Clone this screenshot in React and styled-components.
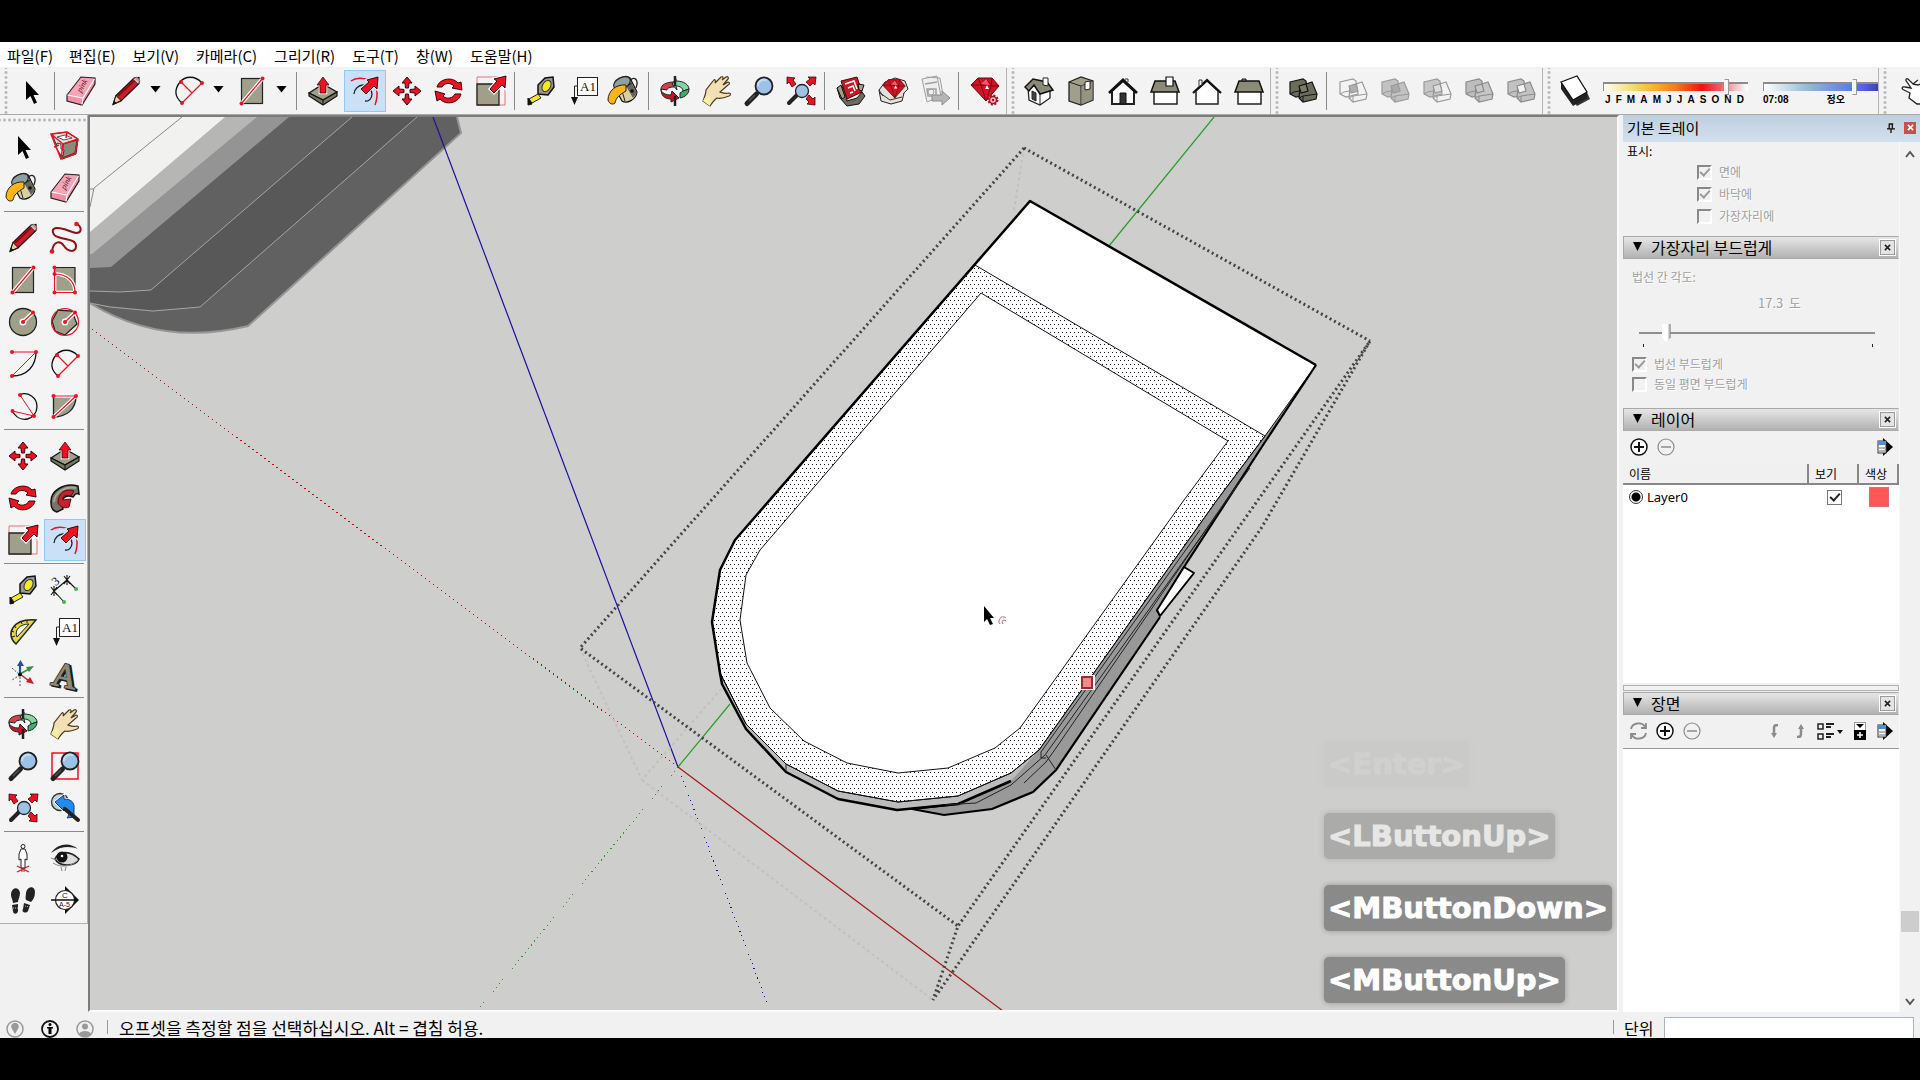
import React, { useState } from 'react';
import styled, { createGlobalStyle, css } from 'styled-components';

const GlobalStyle = createGlobalStyle`
  * {
    box-sizing: border-box;
  }
  body {
    margin: 0;
    background: #000;
    font-family: "Noto Sans CJK KR", sans-serif;
    font-size: 15px;
    color: #000;
  }
  button, input {
    font-family: inherit;
    margin: 0;
  }
`;

/* ---------- icons ---------- */

const RED = '#ee1122';
const STONE = '#a09f8a';

const dot = (x, y, r = 2) => <circle cx={x} cy={y} r={r} fill={RED} />;

const moveHead = 'M15 1l5 6h-3l-.5 5h-3l-.5-5h-3z';

const magnifier = (
  <>
    <path d="M3 27.500l9.500-9.500" stroke="#222" strokeWidth="5" strokeLinecap="round" />
    <path d="M5 25l6-6" stroke="#555" strokeWidth="1.500" />
    <circle cx="20" cy="10" r="8.500" fill="#9cc2e8" stroke="#222" strokeWidth="1.800" />
    <path d="M14 10a6 6 0 0 1 9-5.500" stroke="#c4dcf4" strokeWidth="2" fill="none" />
  </>
);

const gem = (
  <>
    <path d="M8 2h14l7 8-13 15L1 9z" fill="#d31323" stroke="#6d0710" strokeWidth="1" />
    <path d="M8 2l3 7 5-7 5 8 1-8M1 9l10 0 10 1 8 0M11 9l5 16 5-15" fill="none" stroke="#7d0a14" />
    <path d="M11 8l5-5 4 6z" fill="#f4586a" />
    <path d="M15 13l2-4 2 4z" fill="#fff" />
  </>
);

const solids = (a, b, mid, line) => (
  <>
    <path d="M2 6l13-3 3 2 2 13-12 3-6-3z" fill={a} stroke={line} strokeWidth="1.200" />
    <path d="M12 10l12-4 5 12-1 5-13 3-4-4z" fill={b} stroke={line} strokeWidth="1.200" />
    <path d="M11 10l7-2 2 7-7 2z" fill={mid} stroke={line} strokeWidth="1.200" />
    <path d="M11 22l4-2 14-2M15 20v6M2 18l4-2 5-1" fill="none" stroke={line} />
  </>
);

const icons = {
  select: <path d="M10 5v19l4.500-4 3.500 8 3-1.500-3.500-7.500H23z" fill="#000" />,
  component: (
    <>
      <path d="M2 3L17 1l11 7-2 15-14 5z" fill="#e4e4e0" stroke="#222" />
      <path d="M13 13l14-4-2 13-13 5z" fill="#8b8a78" stroke="#222" />
      <path d="M7 12l4 1 0 5 3 1-1 6-3-2-4-6z" fill="#fff" stroke="#333" />
      <path d="M7 6l8-2 7 3-8 2z" fill="#fff" stroke="#555" />
      <path d="M1 3L17 1l11 7-3 15-14 5zM1 3l12 10 15-5M13 13l-2 15M17 1l-1 6M4 16l5-2" fill="none" stroke={RED} strokeWidth="1.500" />
    </>
  ),
  paint: (
    <>
      <path d="M5 12C5 3 15-2 20 2l7 14c-1 8-10 12-15 9z" fill="#d8cfa4" stroke="#111" strokeWidth="1.200" />
      <path d="M16 10l5-4 6 11-4 5z" fill="#66655c" />
      <path d="M12 13l10-6M15 25l-3-10" stroke="#222" />
      <ellipse cx="12" cy="7" rx="9" ry="5.500" transform="rotate(-28 12 7)" fill="#8fa0a0" stroke="#222" strokeWidth="1.200" />
      <path d="M16 9C6 8-2 15-2 24c1 4 5 5 7 3 1-5 4-8 11-12z" fill="#fdb515" stroke="#222" />
      <path d="M20 4c5-4 9 0 6 8" fill="none" stroke="#222" strokeWidth="1.300" />
      <circle cx="22" cy="15" r="1.800" fill="#111" />
    </>
  ),
  eraser: (
    <>
      <path d="M1 19L15 1l14 1v6L16 29 1 25z" fill="#f58ea4" stroke="#222" strokeWidth="1.200" />
      <path d="M2 19L15 2l13 1-11 18z" fill="#f7a4b8" />
      <path d="M1.500 19l15.500 3L28.500 3M17 22l-1 6.500" fill="none" stroke="#fff" strokeWidth="1.200" />
      <text x="15" y="17" transform="rotate(-60 15 17)" fontSize="8" fontStyle="italic" fontFamily="Liberation Serif" fill="#4d1022">pink</text>
    </>
  ),
  pencil: (
    <>
      <path d="M2 28.500l3-9L23 2l5-.5v6L10 25z" fill="#cf1b26" stroke="#111" strokeWidth="1.200" />
      <path d="M7 20L24 4" stroke="#7a0b12" strokeWidth="1.500" />
      <path d="M2 28.500l3-9 5 5z" fill="#e6cf9a" stroke="#111" />
      <path d="M2 28.500l1.200-3.500 2.300 2z" fill="#111" />
      <path d="M22 3l5 5 2-3-3-4z" fill="#c9c9c9" stroke="#444" strokeWidth=".8" />
      <path d="M25 2l3 3" stroke="#e7808c" strokeWidth="2" />
    </>
  ),
  freehand: (
    <>
      <path d="M2 29C3 18 10 17 14 23s12 7 12 0-10-6-18-9C2 12 1 6 6 5c7-1 14 4 20 5 6 0 6-6 1-9" fill="none" stroke="#8f1119" strokeWidth="2" />
      {dot(2, 28.500, 2.300)}
      {dot(26.500, 1, 2.300)}
    </>
  ),
  rect: (
    <>
      <rect x="4.500" y="2.500" width="21" height="25" fill={STONE} stroke="#222" strokeWidth="1.200" />
      <path d="M4.500 27.500l21-25" stroke="#fff" strokeWidth="3.600" />
      <path d="M4.500 27.500l21-25" stroke={RED} strokeWidth="1.200" />
      {dot(4.500, 27.500)}
      {dot(25.500, 2.500)}
    </>
  ),
  rotRect: (
    <>
      <path d="M4.500 2.500h20.500v25H4.500z" fill={STONE} stroke="#222" strokeWidth="1.200" />
      <path d="M4.500 9C17 9 25 16 25 27.500H4.500z" fill={STONE} stroke="#fff" strokeWidth="3.600" />
      <path d="M4.500 9C17 9 25 16 25 27.500H4.500zV2.500" fill="none" stroke={RED} strokeWidth="1.200" />
      {dot(4.500, 2.500)}
      {dot(4.500, 9)}
      {dot(4.500, 27.500)}
      {dot(25, 27.500)}
    </>
  ),
  circle: (
    <>
      <circle cx="15" cy="15" r="13.500" fill={STONE} stroke="#222" strokeWidth="1.300" />
      <path d="M15 15L25 5.500" stroke="#fff" strokeWidth="4" />
      <circle cx="15" cy="15" r="3.500" fill="#fff" />
      <path d="M15 15L25 5.500" stroke={RED} strokeWidth="1.200" />
      {dot(15, 15)}
      {dot(25, 5.500)}
    </>
  ),
  polygon: (
    <>
      <path d="M8 3l14 1 5 13-12 11-10-4-3-10z" fill={STONE} stroke="#222" strokeWidth="1.300" />
      <circle cx="15" cy="15" r="13.500" fill="none" stroke={RED} strokeWidth="1.200" />
      <path d="M15 15L25 5.500" stroke="#fff" strokeWidth="4" />
      <circle cx="15" cy="15" r="3.500" fill="#fff" />
      <path d="M15 15L25 5.500" stroke={RED} strokeWidth="1.200" />
      {dot(15, 15)}
      {dot(25, 5.500)}
    </>
  ),
  arc: (
    <>
      <path d="M28 3c0 14-9 24-24 24" fill="none" stroke="#111" strokeWidth="1.300" />
      <path d="M28 3H4M28 3L4 27" fill="none" stroke={RED} />
      {dot(28, 3)}
      {dot(4, 3)}
      {dot(4, 27)}
    </>
  ),
  arc2: (
    <>
      <path d="M28 7C21-1 11 0 6 6-1 15 2 22 8 27" fill="none" stroke="#111" strokeWidth="1.300" />
      <path d="M28 7L8 27M7 6l11 11" fill="none" stroke={RED} strokeWidth="1.200" />
      {dot(28, 7)}
      {dot(7, 6)}
      {dot(8, 27)}
    </>
  ),
  arc3: (
    <>
      <path d="M12 3.500c8-3 17 3 17 12 0 13-17 19-25 4" fill="none" stroke="#111" strokeWidth="1.300" />
      <path d="M12 4l14 21L4.500 20" fill="none" stroke={RED} />
      {dot(12, 4)}
      {dot(26, 25)}
      {dot(4.500, 20)}
    </>
  ),
  pie: (
    <>
      <path d="M3.500 5H26c0 13-9 21-22.500 21z" fill={STONE} stroke="#222" strokeWidth="1.300" />
      <path d="M3.500 26L26 5H3.500" stroke="#fff" strokeWidth="3.600" fill="none" />
      <path d="M3.500 26L26 5H3.500" stroke={RED} strokeWidth="1.200" fill="none" />
      {dot(3.500, 5)}
      {dot(26, 5)}
      {dot(3.500, 26)}
    </>
  ),
  move: [0, 90, 180, 270].map((a) => (
    <path key={a} d={moveHead} transform={`rotate(${a} 15 15)`} fill={RED} stroke="#3a0508" />
  )),
  push: (
    <>
      <path d="M1 17l14-9 14 8-14 8z" fill={STONE} stroke="#111" strokeWidth="1.200" />
      <path d="M1 17v3l14 9 14-9v-4l-14 8z" fill="#77755f" stroke="#111" strokeWidth="1.200" />
      <path d="M15 24v5" stroke="#111" />
      <path d="M15 1l6 8h-3v8h-6V9H9z" fill={RED} stroke="#fff" strokeWidth="2.500" />
      <path d="M15 1l6 8h-3v8h-6V9H9z" fill={RED} stroke="#3a0508" strokeWidth=".8" />
    </>
  ),
  rotate: (
    <>
      <path d="M3 11C5 3 18 0 24 7l3-1 1 8-10-2 2-2C16 6 10 7 8 11z" fill={RED} stroke="#3a0508" />
      <path d="M27 18c-2 9-15 12-21 5l-3 2-2-10 10 3-2 2c4 4 10 2 12-2z" fill={RED} stroke="#3a0508" />
    </>
  ),
  follow: (
    <>
      <path d="M1 20C0 8 14-1 28 3l1 8c-4-2-5 2-6 3-8-3-14 2-10 12l-6 3c-4-1-6-5-6-9z" fill="#77756a" stroke="#111" strokeWidth="1.500" />
      <path d="M4 19C5 9 15 3 26 5" fill="none" stroke="#aaa896" strokeWidth="2" />
      <path d="M8 20C8 10 15 5 24 8l-3 5c-6-2-9 1-8 4l8-1-2 8c-4 2-9 0-11-4z" fill="#c9202b" stroke="#5d0a10" />
    </>
  ),
  scale: (
    <>
      <path d="M1 1h28v28H1z" fill="none" stroke="#e8707a" />
      <path d="M1 8h22v21H1z" fill={STONE} stroke="#222" strokeWidth="1.300" />
      <path d="M14 13l7-8-3-2 12-3-1 12-3-3-8 8z" fill={RED} stroke="#fff" strokeWidth="3" />
      <path d="M14 13l7-8-3-2 12-3-1 12-3-3-8 8z" fill={RED} stroke="#3a0508" />
    </>
  ),
  offset: (
    <>
      <path d="M1 5C10-2 34 3 25 29" fill="none" stroke={RED} strokeWidth="1.500" />
      <path d="M4 18c1-11 17-13 18 0 0 4-3 8-7 7" fill="none" stroke="#222" strokeWidth="1.300" />
      <path d="M11 13l8-7-2-2 11-3-1 12-3-3-8 8z" fill={RED} stroke="#cfe2f6" strokeWidth="3" />
      <path d="M11 13l8-7-2-2 11-3-1 12-3-3-8 8z" fill={RED} stroke="#3a0508" />
    </>
  ),
  tape: (
    <>
      <path d="M12 9L19 2l8-1 1 10-6 8-10-1z" fill="#99998f" stroke="#111" strokeWidth="1.500" />
      <ellipse cx="20.500" cy="10" rx="4" ry="6" transform="rotate(30 20.500 10)" fill="#f4ea1e" stroke="#333" />
      <path d="M3 23l9-5 3 4-9 5z" fill="#f4ea1e" stroke="#222" />
      <path d="M2 22l4 6-4 1z" fill="#111" stroke="#111" />
    </>
  ),
  dimension: (
    <>
      <path d="M4 16L17 5M4 16l10 11M17 5l9 9M1 12l6 8M7 12l-6 8M14 1l6 8M20 1l-6 8M4 11v10M17 0v10" fill="none" stroke="#111" strokeWidth="1.100" />
      <text x="3" y="10" fontSize="12" fill="#111" transform="rotate(-40 6 7)" fontFamily="Liberation Serif">3</text>
      <circle cx="14" cy="27" r="2" fill="#3fb54a" />
      <circle cx="26" cy="14" r="2" fill="#3fb54a" />
    </>
  ),
  protractor: (
    <>
      <path d="M8 27C-3 18 4 1 28 3z" fill="#e5d83a" stroke="#222" strokeWidth="1.500" />
      <path d="M9 20C6 13 12 7 21 7z" fill="#f3f3f3" stroke="#222" />
      <path d="M3 14l3 1M6 8l2 3M13 4l1 3M19 3v3M4 20l3-1" stroke="#222" />
    </>
  ),
  text: (
    <>
      <rect x="9.500" y="1.500" width="20" height="18" fill="#fff" stroke="#222" />
      <text x="12" y="15" fontSize="13" fontFamily="Liberation Serif" fill="#111">A1</text>
      <path d="M9.500 10H6.500v13" fill="none" stroke="#222" />
      <path d="M3 21h7l-3.500 8z" fill="#111" />
    </>
  ),
  axes: (
    <>
      <path d="M4 9l8 7M12 18v9M12 16l-8 5" stroke="#555" strokeDasharray="2 1.500" />
      <path d="M12 15V5" stroke="#234f9e" strokeWidth="2.200" />
      <path d="M9 7l3.500-6L16 7z" fill="#234f9e" />
      <path d="M12 15l9-5" stroke="#2f9440" strokeWidth="1.500" />
      <path d="M18 8l8-1-5 6z" fill="#2f9440" />
      <path d="M12 15l9 7" stroke="#cf1b26" strokeWidth="1.500" />
      <path d="M22 18l4 7-8-2z" fill="#cf1b26" />
      <circle cx="12" cy="15.500" r="2" fill="#111" />
    </>
  ),
  text3d: (
    <g transform="rotate(12 15 15)" fontSize="34" fontFamily="Liberation Serif">
      <text x="5" y="29" fill="#333" stroke="#1a1a1a" strokeWidth="2.500">A</text>
      <text x="3" y="28" fill="#8b8a78" stroke="#222" strokeWidth="2.500">A</text>
      <text x="3" y="28" fill="#8b8a78" stroke="#8b8a78" strokeWidth="1">A</text>
    </g>
  ),
  orbit: (
    <>
      <path d="M14 6C6 6 1 9 1 13l6 1c0-2 3-3 7-3z" fill="#d6404a" stroke="#222" />
      <path d="M16 5c8 0 13 4 13 8l-6 2c0-3-3-5-7-5l1 4-5-6 4-5z" fill="#7fd6a0" stroke="#222" />
      <path d="M29 13c0 5-4 8-9 9v-5l3-2z" fill="#3fae6c" stroke="#222" />
      <path d="M1 13c0 4 5 6 10 6l1-4 7 7-8 4v-3C4 23 1 19 1 13z" fill="#c2182b" stroke="#222" />
      <path d="M15 0v10M15 20v10" stroke="#222" strokeWidth="2.500" />
    </>
  ),
  pan: (
    <>
      <path d="M1 25c2-5 3-8 3-11l7-9c2-3 3 0 2 2l6-6c2-1 3 1 1 3l4-3c2-1 3 1 2 2l-5 6 5-3c2 0 2 2 0 3l-8 7c3 1 5 2 9 1 2 0 2 2 0 3-5 2-8 3-12 2-3 2-5 5-7 8z" fill="#f3dfb6" stroke="#4a3a1c" strokeWidth="1.200" />
      <path d="M1 25c2-4 3-6 7-5 1 3 0 7 0 10z" fill="#f7eda6" />
    </>
  ),
  zoom: magnifier,
  zoomWindow: (
    <>
      <rect x="2" y="2" width="26" height="26" fill="none" stroke={RED} strokeWidth="1.500" />
      {magnifier}
    </>
  ),
  extents: (
    <>
      <path d="M3 27l9-9" stroke="#222" strokeWidth="4" strokeLinecap="round" />
      <circle cx="16" cy="15" r="6.500" fill="#9cc2e8" stroke="#222" strokeWidth="1.300" />
      {['M1 1l8 1-2 2 3 4-4 3-3-5-2 2z', 'M30 1l-1 8-2-2-3 3-4-4 4-3-2-2z', 'M29 29l-8-1 2-2-3-3 3-4 4 4 2-2z'].map((d) => (
        <path key={d} d={d} fill={RED} stroke="#3a0508" strokeWidth=".8" />
      ))}
    </>
  ),
  previous: (
    <>
      <circle cx="10" cy="9" r="8.500" fill="#b9d2ea" stroke="#333" strokeWidth="1.300" />
      <path d="M5 9l9-7v4c8 0 11 4 10 11v7l-7 1c3-4 2-9-3-11v4z" fill="#1f8df0" stroke="#fff" strokeWidth="2.500" />
      <path d="M5 9l9-7v4c8 0 11 4 10 11v7l-7 1c3-4 2-9-3-11v4z" fill="#1f8df0" stroke="#114" strokeWidth=".8" />
      <path d="M15 16l13 11" stroke="#222" strokeWidth="4" strokeLinecap="round" />
    </>
  ),
  person: (
    <>
      <path d="M9 29l12-6M9 23l12 6M13 28h4" stroke={RED} strokeWidth="1.200" />
      <circle cx="15" cy="3.500" r="2" fill="#fff" stroke="#222" />
      <path d="M13 6l-2 5 0 6 2-1v9h4v-9l2 1v-6l-2-5z" fill="#fff" stroke="#222" />
    </>
  ),
  eye: (
    <>
      <path d="M1 10C8 0 20-1 28 6c-8-3-17-3-27 4z" fill="#222" />
      <path d="M5 16c4-8 15-9 24 0-3 7-19 9-24 0z" fill="#ddd" stroke="#222" strokeWidth="1.600" />
      <circle cx="12" cy="14" r="5.500" fill="#111" />
      <circle cx="12" cy="13" r="1.300" fill="#fff" />
      <path d="M1 15l5 2M3 20c8 5 18 4 25-3M11 24l1 4M16 24l-1 4" stroke="#888" fill="none" />
    </>
  ),
  walk: (
    <>
      <path d="M3 10C3 2 11 1 12 8c0 4-2 6-2 9l-5 1c0-3-2-5-2-8zM4 20l6-1 0 7c0 3-5 4-5 0z" fill="#222" />
      <path d="M18 8c1-7 9-8 9-1 0 5-2 8-4 10l-5-2c-1-2 0-5 0-7zM16 18l6 2-2 6c-2 3-7 1-5-2z" fill="#222" />
      <path d="M5 23h5M17 21l4 1" stroke="#bbb" strokeDasharray="1 1" />
    </>
  ),
  section: (
    <>
      <path d="M15 1l7 7-7 0zM15 29l7-7-7 0zM22 8l7 7-7 7z" fill="#111" />
      <circle cx="15" cy="15" r="9.500" fill="#fff" stroke="#222" strokeWidth="1.200" />
      <path d="M1 15h26" stroke="#111" strokeWidth="1.500" />
      <text x="12" y="13" fontSize="8" fill="#222" fontFamily="Liberation Sans">C</text>
      <text x="9" y="22" fontSize="7" fill="#222" fontFamily="Liberation Sans">A-5</text>
    </>
  ),
  warehouse: (
    <>
      <path d="M1 12l8-1 2 14 10-3 5-6 3 4-6 8-12 2-7-8z" fill="#6d6b5c" stroke="#111" />
      <path d="M5 5l16-4 5 15-15 7z" fill="#c9182a" stroke="#500" />
      <path d="M9 8l9-3 3 8M12 12l5-2 2 5M14 17l3-1" fill="none" stroke="#fff" strokeWidth="1.500" />
      <path d="M1 12l4-3 4 12-3 2zM22 8l6 1-2 6-3-1z" fill="#a09f8a" stroke="#111" />
    </>
  ),
  extWarehouse: (
    <>
      <path d="M1 14l6-8 10-4 10 3 3 8-4 4-2 8-11 3-10-3z" fill="#e2e2dc" stroke="#222" />
      <path d="M1 14l4 6M30 13l-5 5M2 17l10 7 12-3" fill="none" stroke="#333" />
      <g transform="translate(4 2) scale(.8)">{gem}</g>
    </>
  ),
  share: (
    <>
      <path d="M2 3l15-3 4 20-14 6zM6 1l14 1 3 17" fill="#eee" stroke="#a0a0a0" />
      <path d="M5 8l12-2M7 13h9v7H8z" fill="none" stroke="#a0a0a0" strokeWidth="1.500" />
      <circle cx="11" cy="16" r="3" fill="none" stroke="#a0a0a0" />
      <path d="M12 19h10v-4l8 7-8 7v-4H12z" fill="#b5b5b5" stroke="#8d8d8d" />
    </>
  ),
  ruby: (
    <>
      {gem}
      <circle cx="23" cy="24" r="4.500" fill="#f7c8cc" stroke="#a5121f" strokeWidth="2" strokeDasharray="2 1.500" />
      <circle cx="23" cy="24" r="3.500" fill="#f7c8cc" stroke="#a5121f" strokeWidth="1.500" />
      <circle cx="23" cy="24" r="1.200" fill="#a5121f" />
    </>
  ),
  iso: (
    <>
      <path d="M4 12l1 12 11 5 10-7V11l-8-3z" fill="#fff" stroke="#222" strokeWidth="1.300" />
      <path d="M16 16v13" stroke="#222" />
      <path d="M1 11L9 3l14 3 6 8-13 4-6-9-5 6z" fill="#8b8a78" stroke="#111" strokeWidth="1.500" />
      <path d="M19 2h5v8l-5-1z" fill="#fff" stroke="#222" />
      <path d="M8 15l4 2v8l-4-2z" fill="#444" stroke="#222" />
    </>
  ),
  top: (
    <>
      <path d="M3 6l12-5 12 4v19l-12 5-12-4z" fill={STONE} stroke="#222" strokeWidth="1.300" />
      <path d="M3 6l12 4 12-5M15 10v19" fill="none" stroke="#222" />
      <path d="M15 10l12-5v19l-12 5z" fill="#8b8a78" opacity=".5" />
      <path d="M19 6l5-1v8l-5 1z" fill="#fff" stroke="#222" />
    </>
  ),
  front: (
    <>
      <path d="M4 15v13h22V15L15 5z" fill="#fff" stroke="#222" strokeWidth="2" />
      <path d="M1 17L15 4l14 13" fill="none" stroke="#111" strokeWidth="2.800" />
      <path d="M12 17h6v11h-6z" fill="#333" stroke="#111" />
      <path d="M17 3h3v3" fill="none" stroke="#333" />
    </>
  ),
  right: (
    <>
      <path d="M4 15h23v13H4z" fill="#fff" stroke="#222" strokeWidth="1.500" />
      <path d="M5 5h20l4 11H1z" fill="#8b8a78" stroke="#111" strokeWidth="1.500" />
      <path d="M16 1h7v9h-7z" fill="#fff" stroke="#111" strokeWidth="1.200" />
    </>
  ),
  back: (
    <>
      <path d="M4 15v13h22V15L15 5z" fill="#fff" stroke="#222" strokeWidth="1.500" />
      <path d="M1 17L15 4l14 13" fill="none" stroke="#111" strokeWidth="2.200" />
      <path d="M7 10V4h3v4" fill="#fff" stroke="#333" />
    </>
  ),
  left: (
    <>
      <path d="M4 15h23v13H4z" fill="#fff" stroke="#222" strokeWidth="1.500" />
      <path d="M5 5h20l4 11H1z" fill="#8b8a78" stroke="#111" strokeWidth="1.500" />
      <path d="M8 3h4v2H8z" fill="#8b8a78" stroke="#111" />
    </>
  ),
  shell: solids('#6d6c5c', '#6d6c5c', '#7d7c6b', '#151515'),
  intersect: solids('none', 'none', '#b0b0b0', '#9a9a9a'),
  union: solids('#c2c2c2', '#c2c2c2', '#aaa', '#9a9a9a'),
  subtract: solids('#c6c6c6', 'none', '#ddd', '#999'),
  trim: solids('#bdbdbd', '#c6c6c6', '#c6c6c6', '#8b8b8b'),
  split: solids('#c2c2c2', '#c2c2c2', '#f4f4f4', '#8b8b8b'),
  shadow: (
    <>
      <path d="M25 12l5 11-13 7-4-6z" fill="#333" />
      <path d="M1 6v7l12 17v-6zM13 24l14-8v6l-14 8z" fill="#222" />
      <path d="M1 6L17 0l10 16-14 8z" fill="#fff" stroke="#111" strokeWidth="1.300" />
    </>
  ),
  interact: (
    <path d="M22 4l-5 4-5-5c-2-1-3 1-1 3l4 6-6-1c-3-1-4 2-1 3l6 3-1 5 8 6h6M17 8l5 1 5-2" fill="#fff" stroke="#222" strokeWidth="1.300" />
  ),
};

const IconSvg = styled.svg`
  display: block;
  width: 30px;
  height: 30px;
  overflow: visible;
`;

const Icon = ({ name }) => (
  <IconSvg viewBox="0 0 30 30" fill="none" aria-hidden="true">
    {icons[name]}
  </IconSvg>
);

/* ---------- frame ---------- */

const Screen = styled.div`
  display: flex;
  flex-direction: column;
  height: 100vh;
  padding: 42px 0;
  background: #000;
  overflow: hidden;
`;

const MenuBar = styled.nav`
  display: flex;
  flex: none;
  gap: 2px;
  height: 25px;
  background: #fff;
`;

const MenuButton = styled.button`
  padding: 2px 7px 0;
  border: 0;
  background: none;
  font-size: 15px;
  line-height: 23px;
  white-space: nowrap;

  & + & {
    padding-right: 8px;
  }
`;

const TopToolbar = styled.div`
  display: flex;
  flex: none;
  align-items: center;
  height: 48px;
  padding-top: 1px;
  border-bottom: 1px solid #a9a9a9;
  background: #f3f3f3;
  overflow: hidden;
`;

const Grip = styled.span`
  flex: none;
  width: ${(p) => (p.$first ? 10 : 12)}px;
  height: 100%;
  border-left: ${(p) => (p.$first ? 0 : 1)}px solid #b4b4b4;
  background: radial-gradient(circle, #bbb 1px, transparent 2px) 4px 2px / 4px 5px repeat-y;
`;

const ToolButton = styled.button`
  display: grid;
  flex: none;
  place-items: center;
  width: 42px;
  height: 42px;
  padding: 0;
  border: 1px solid transparent;
  background: none;
  ${(p) =>
    p.$active &&
    css`
      border-color: #90c8f6;
      background: #c9e0f7;
    `}
`;

const DropButton = styled.button`
  flex: none;
  width: 21px;
  height: 42px;
  padding: 0 0 4px 3px;
  border: 0;
  background: none;
  text-align: left;

  &::before {
    content: '';
    display: block;
    width: 11px;
    height: 7px;
    background: #000;
    clip-path: polygon(0 0, 100% 0, 50% 100%);
  }
`;

const Separator = styled.span`
  flex: none;
  background: #8a8a8a;
  ${(p) =>
    p.$horizontal
      ? css`
          height: 1px;
          margin: 2px 2px 5px;
          grid-column: 1 / -1;
        `
      : css`
          width: 1px;
          height: 38px;
          margin: 0 5px 0 2px;
        `}
`;

const Gap = styled.span`
  flex: none;
  width: 3px;
`;

const ShadowControl = styled.label`
  display: flex;
  flex: none;
  flex-direction: column;
  width: ${(p) => p.$width}px;
  margin: 2px 0 0 7px;
  & + & {
    margin-left: 15px;
  }
`;

const ShadowRange = styled.input`
  appearance: none;
  display: block;
  width: 100%;
  height: 16px;
  background: none;

  &::-webkit-slider-runnable-track {
    height: 9px;
    border: 1px solid #8b8b8b;
    border-width: 2px 0 0 1px;
    background: ${(p) => p.$track};
  }
  &::-webkit-slider-thumb {
    appearance: none;
    width: 5px;
    height: 16px;
    margin-top: -5px;
    border: 1px solid #999;
    border-left-color: #fff;
    background: #f4f4f4;
  }
`;

const ScaleText = styled.span`
  display: flex;
  justify-content: ${(p) => (p.$months ? 'space-between' : 'flex-start')};
  gap: ${(p) => (p.$months ? 0 : 38)}px;
  padding: ${(p) => (p.$months ? '0 4px 0 2px' : 0)};
  font: bold 10px/12px "Liberation Sans", "Noto Sans CJK KR", sans-serif;
`;

const Main = styled.main`
  display: flex;
  flex: 1;
  min-height: 0;
  background: #f1f1f1;
`;

const SideColumn = styled.aside`
  flex: none;
  width: 88px;
`;

const SideToolbar = styled.div`
  display: grid;
  grid-template-columns: 42px 42px;
  align-content: start;
  padding: 10px 1px 2px 2px;
  border: solid #b0b0b0;
  border-width: 0 1px 1px 0;
  background: radial-gradient(circle, #bbb 1px, transparent 2px) 2px 3px / 5px 4px repeat-x #f4f4f4;
`;

const Viewport = styled.section`
  position: relative;
  flex: 1;
  min-width: 0;
  border-style: solid;
  border-width: 2px;
  border-color: #7c7c7c #fafafa #fafafa #7c7c7c;
  background: #cececc;
  overflow: hidden;
`;

const SceneSvg = styled.svg`
  display: block;
  width: 100%;
  height: 100%;
`;

const KeyStack = styled.div`
  position: absolute;
  right: 5px;
  bottom: 7px;
  display: flex;
  flex-direction: column;
  align-items: flex-start;
  gap: 26px;
`;

const KeyBadge = styled.kbd`
  padding: 0 4px;
  border-radius: 5px;
  background: #8a8a8a;
  box-shadow: 0 0 5px 1px rgba(0, 0, 0, 0.2);
  color: #fff;
  font: bold 29px/46px "DejaVu Sans", sans-serif;
  -webkit-text-stroke: 1px #fff;
  opacity: ${(p) => p.$opacity};
`;

/* ---------- tray ---------- */

const Tray = styled.aside`
  display: flex;
  flex: none;
  flex-direction: column;
  width: 301px;
  padding-left: 4px;
`;

const TrayTitle = styled.header`
  display: flex;
  flex: none;
  align-items: center;
  height: 27px;
  padding: 0 4px 2px;
  background: linear-gradient(#bfcfdf, #d3e0ed);
  font-size: 15px;
`;

const PlainButton = styled.button`
  display: grid;
  flex: none;
  place-items: center;
  min-width: 16px;
  height: 18px;
  padding: 0;
  border: 0;
  background: none;
`;

const TrayClose = styled(PlainButton)`
  width: 12px;
  min-width: 12px;
  height: 12px;
  margin-left: 5px;
  background: #c4504e;
`;

const Spacer = styled.span`
  flex: 1;
`;

const TrayBody = styled.div`
  display: flex;
  flex: 1;
  min-height: 0;
`;

const Panels = styled.div`
  display: flex;
  flex: 1;
  flex-direction: column;
  min-width: 0;
`;

const Scrollbar = styled.div`
  display: flex;
  flex: none;
  flex-direction: column;
  align-items: center;
  width: 21px;
  padding: 7px 1px 5px;
  border-left: 1px solid #fafafa;
`;

const ScrollTrack = styled.div`
  display: flex;
  flex: 1;
  flex-direction: column;
  align-self: stretch;
`;

const ScrollThumb = styled.div`
  height: 21px;
  margin-top: auto;
  margin-bottom: 65px;
  background: #cdcdcd;
`;

const ShowOptions = styled.div`
  display: flex;
  flex: none;
  flex-direction: column;
  height: 94px;
  padding: 0 4px;
  font-size: 12px;
  line-height: 18px;
`;

const CheckGroup = styled.div`
  display: flex;
  flex-direction: column;
  gap: ${(p) => p.$gap}px;
  padding: ${(p) => p.$pad};
`;

const CheckLabel = styled.label`
  display: flex;
  align-items: center;
  gap: 7px;
  height: 16px;
  color: #a0a0a0;
  font-size: 12px;
  text-shadow: 1px 1px 0 #fff;
`;

const CheckBox = styled.input`
  appearance: none;
  position: relative;
  display: block;
  width: 15px;
  height: 15px;
  border: ${(p) => (p.disabled ? 2 : 1)}px solid #777;
  ${(p) =>
    p.disabled &&
    css`
      border-color: #888 #fff #fff #888;
    `}
  background: ${(p) => (p.disabled ? 'none' : '#fff')};

  &:checked::after {
    content: '';
    position: absolute;
    left: 50%;
    top: 40%;
    width: 4px;
    height: 8px;
    border: solid ${(p) => (p.disabled ? '#999' : '#222')};
    border-width: 0 2px 2px 0;
    transform: translate(-50%, -50%) rotate(42deg);
  }
`;

const PanelHeader = styled.header`
  display: flex;
  flex: none;
  align-items: center;
  height: 23px;
  padding: 0 2px 0 9px;
  border: 1px solid #a9a9a9;
  border-right-color: #ddd;
  background: linear-gradient(#e6e6e6, #b2b2b2);
`;

const PanelTitle = styled.h2`
  display: flex;
  align-items: center;
  gap: 9px;
  margin: 0;
  padding-bottom: 2px;
  font-size: 16px;
  font-weight: 400;
  line-height: 18px;

  &::before {
    content: '';
    width: 9px;
    height: 9px;
    background: #000;
    clip-path: polygon(0 0, 100% 0, 50% 100%);
  }
`;

const PanelClose = styled(PlainButton)`
  width: 17px;
  height: 17px;
  border: 1px solid #fff;
  outline: 1px solid #9a9a9a;
  outline-offset: -2px;
  background: #e4e4e4;
`;

const SoftenPanel = styled.div`
  display: flex;
  flex: none;
  flex-direction: column;
  height: 149px;
  padding: 9px 9px 0;
  color: #a0a0a0;
  font-size: 12px;
  line-height: 18px;
  text-shadow: 1px 1px 0 #fff;
`;

const AngleValue = styled.output`
  margin-top: 8px;
  padding-left: 126px;
  font-size: 13px;
`;

const AngleRange = styled.input`
  appearance: none;
  display: block;
  width: 236px;
  height: 18px;
  margin: 12px 7px 0;
  background: linear-gradient(#8f8f8f, #8f8f8f) 0 8px / 100% 2px no-repeat;

  &::-webkit-slider-thumb {
    appearance: none;
    width: 9px;
    height: 18px;
    background: linear-gradient(90deg, #fff 60%, #777);
    clip-path: polygon(0 0, 100% 0, 100% 75%, 50% 100%, 0 75%);
  }
`;

const Ticks = styled.div`
  display: flex;
  flex: none;
  justify-content: space-between;
  width: 230px;
  height: 3px;
  margin: 2px 11px 0;
  border: solid #222;
  border-width: 0 1px;
`;

const IconRow = styled.div`
  display: flex;
  flex: none;
  align-items: center;
  gap: 9px;
  height: 33px;
  padding: 0 6px 2px 7px;
`;

const LayerArea = styled.div`
  flex: none;
  height: 219px;
  background: #fff;
`;

const LayerTable = styled.table`
  width: 100%;
  table-layout: fixed;
  border-collapse: collapse;
  font-size: 12px;

  th {
    height: 20px;
    padding: 0 6px;
    border: 1px solid #888;
    border-width: 0 2px 2px 0;
    background: #f0f0f0;
    font-weight: 400;
    line-height: 16px;
    text-align: left;
    white-space: nowrap;
  }
  td {
    height: 25px;
    padding: 0 6px;
  }
`;

const LayerName = styled.label`
  display: flex;
  align-items: center;
  gap: 4px;
  font: 13px/18px "Noto Sans", sans-serif;
`;

const LayerRadio = styled.input`
  appearance: none;
  width: 14px;
  height: 14px;
  border: 1px solid #333;
  border-radius: 50%;
  background: radial-gradient(circle, #000 4px, #fff 5px);
`;

const Swatch = styled.button`
  display: block;
  width: 20px;
  height: 20px;
  margin-left: 5px;
  padding: 0;
  border: 1px solid #e07070;
  background: #ff5757;
`;

const CenterBox = styled.div`
  display: flex;
  padding-left: 13px;
`;

const Splitter = styled.div`
  flex: none;
  height: 6px;
  margin: 2px 0 1px;
  border: 1px solid #b0b0b0;
`;

const SceneList = styled.div`
  flex: 1;
  border-top: 1px solid #999;
  background: #fff;
`;

/* ---------- status bar ---------- */

const StatusBar = styled.footer`
  display: flex;
  flex: none;
  align-items: center;
  height: 26px;
  padding-left: 6px;
  background: #f1f1f1;
`;

const StatusIcons = styled.div`
  display: flex;
  align-items: center;
  gap: 17px;
  padding: 8px 13px 0 0;
`;

const StatusText = styled.span`
  flex: 1;
  padding: 6px 10px 0 12px;
  font-size: 17px;
  line-height: 20px;
  background: linear-gradient(#999, #999) 0 8px / 1px 14px no-repeat;
`;

const Measure = styled.label`
  display: flex;
  flex: none;
  align-items: flex-end;
  align-self: stretch;
  width: 307px;
  gap: 11px;
  padding: 0 6px 0 11px;
  font-size: 16px;
  line-height: 20px;
  background: linear-gradient(#999, #999) 0 8px / 1px 14px no-repeat;
`;

const MeasureInput = styled.input`
  flex: 1;
  min-width: 0;
  height: 21px;
  border: 1px solid #aab6c6;
  border-bottom: 0;
  background: #fff;
`;

/* ---------- small drawings ---------- */

const Plus = () => (
  <svg width="18" height="18" viewBox="0 0 18 18">
    <circle cx="9" cy="9" r="8" fill="#fff" stroke="#111" strokeWidth="1.500" />
    <path d="M9 4v10M4 9h10" stroke="#111" strokeWidth="2" />
  </svg>
);

const Minus = () => (
  <svg width="18" height="18" viewBox="0 0 18 18">
    <circle cx="9" cy="9" r="8" fill="none" stroke="#8b8b8b" strokeWidth="1.200" />
    <path d="M4 9h10" stroke="#8b8b8b" strokeWidth="1.500" />
  </svg>
);

const Details = () => (
  <svg width="16" height="18" viewBox="0 0 16 18">
    <path d="M6 0l10 9-10 9z" fill="#000" />
    <rect x="1" y="3" width="8" height="12" fill="#fff" stroke="#333" />
    <path d="M1 3h8v4H1z" fill="#4d8fd6" />
    <path d="M2 10h6M2 13h6" stroke="#666" />
  </svg>
);

const Refresh = () => (
  <svg width="17" height="18" viewBox="0 0 17 18" fill="none" stroke="#8b8b8b" strokeWidth="1.800">
    <path d="M1 7c1-6 11-8 14-2M16 1v5h-5M16 11c-1 6-11 8-14 2M1 17v-5h5" />
  </svg>
);

const Hook = ({ up }) => (
  <svg width="8" height="14" viewBox="0 0 8 14" fill="none">
    {up ? (
      <>
        <path d="M1 13c4 0 4-1 4-4V4" stroke="#8b8b8b" strokeWidth="2.500" />
        <path d="M2 5h6L5 0z" fill="#8b8b8b" />
      </>
    ) : (
      <>
        <path d="M7 1C3 1 3 2 3 5v5" stroke="#8b8b8b" strokeWidth="2.500" />
        <path d="M0 9h6l-3 5z" fill="#8b8b8b" />
      </>
    )}
  </svg>
);

const ListView = () => (
  <svg width="26" height="18" viewBox="0 0 26 18" fill="none" stroke="#222">
    <path d="M1 2h5v5H1zM1 12h5v5H1z" strokeWidth="1.500" />
    <path d="M9 2h8M9 5h5M9 12h8M9 15h5" strokeWidth="1.800" />
    <path d="M20 8h6l-3 4z" fill="#111" stroke="none" />
  </svg>
);

const MiniPanel = () => (
  <svg width="12" height="18" viewBox="0 0 12 18">
    <rect x=".5" y=".5" width="11" height="17" fill="#fff" stroke="#999" />
    <path d="M2 2h8l-4 4z" />
    <path d="M0 8h12v10H0z" />
    <path d="M6 10v6M3 13h6" stroke="#fff" strokeWidth="1.500" />
  </svg>
);

const Cross = ({ color, size }) => (
  <svg width={size} height={size} viewBox="0 0 8 8">
    <path d="M1 1l6 6M7 1L1 7" stroke={color} strokeWidth="1.800" />
  </svg>
);

const Chevron = ({ down }) => (
  <svg width="12" height="10" viewBox="0 0 12 10" fill="none">
    <path d={down ? 'M2 2l4 5 4-5' : 'M2 8l4-5 4 5'} stroke="#555" strokeWidth="2" />
  </svg>
);

/* ---------- model view ---------- */

const topFace =
  'M1030 201L735 540L720 570L712 622L720 673L746 724L786 764L838 791L898 802L958 796L1011 773L1039 750L1217 500L1265 436L1316 365z';
const ring =
  'M975 265L735 540L720 570L712 622L720 673L746 724L786 764L838 791L898 802L958 796L1011 773L1039 750L1217 500L1265 436z' +
  'M981 293L1228 441L1184 500L1020 728L995 748L948 768L898 773L847 763L804 741L770 708L747 663L740 620L746 575L760 550L803 500z';

const Scene = () => (
  <SceneSvg viewBox="90 117 1527 893" preserveAspectRatio="xMinYMin slice" fill="none" role="img" aria-label="model">
    <defs>
      <pattern id="dots" width="4" height="8" patternUnits="userSpaceOnUse">
        <path d="M0 0h1v1H0zM2 4h1v1H2z" fill="#12123a" shapeRendering="crispEdges" />
      </pattern>
      <linearGradient id="side" x1="0" y1="0" x2="1" y2="1">
        <stop offset="0" stopColor="#888" />
        <stop offset="1" stopColor="#a4a4a6" />
      </linearGradient>
    </defs>

    {/* component outside the edited group */}
    <path d="M90 117H457L461 133L248 326Q161 347 90 303z" fill="#616161" />
    <path d="M352 117L151 290L120 292L90 291V303L153 311L200 307L417 117z" fill="#585858" />
    <path d="M90 117H289L111 267L90 268z" fill="#949494" />
    <path d="M90 117H257L92 254H90z" fill="#b6b7b5" />
    <path d="M90 117H225L90 232z" fill="#f1f1ef" />
    <path d="M182 117L94 188L90 207M90 189h4" stroke="#888" />
    <path d="M352 117L151 290L120 292L90 291M417 117L200 307L153 311L110 307L90 303" stroke="#a5a5a5" />
    <path d="M457 117L461 133L248 326Q161 347 90 303" stroke="#959595" strokeWidth="2" />

    {/* axes */}
    <path d="M678 767L433 117" stroke="#1a12a0" strokeWidth="1.200" />
    <path d="M678 767L1003 1011" stroke="#a31515" strokeWidth="1.200" />
    <path d="M678 767L730 704M1109 246L1214 117" stroke="#26a026" strokeWidth="1.200" />
    <g strokeDasharray="1 4" shapeRendering="crispEdges">
      <path d="M678 767L770 1011" stroke="#1a12a0" />
      <path d="M678 767L90 328" stroke="#a31515" />
      <path d="M678 767L477 1011" stroke="#26a026" />
    </g>

    {/* bounding box of the open group */}
    <path d="M580 648L642 780L722 688M642 780L933 1000M1024 148L1014 210" stroke="#c1c1bf" strokeWidth="2" strokeDasharray="3 3" />
    <path d="M1024 148L580 648L958 926L933 1000L1262 527L1370 341L958 926M1024 148L1370 341" stroke="#444" strokeWidth="3" strokeDasharray="2 3" />

    {/* sides */}
    <path d="M1316 365L1265 442L1184 567L1160 615L1056 770L1033 792L992 809L944 815L915 810L897 810L958 800L1039 750L1217 500z" fill="url(#side)" />
    <path d="M720 673L722 684L746 729L786 772L838 799L897 810L958 804L1011 781L1039 757V740L786 750z" fill="#bcbcbc" />
    <path d="M1011 781L958 804L915 809L944 815L992 809L1033 792L1056 770L1046 755L1039 750z" fill="#999" />
    <path d={topFace} fill="#fff" stroke="#111" />
    <path d={ring} fill="url(#dots)" fillRule="evenodd" stroke="#111" />
    <path
      d="M1316 365L1030 201L735 540L720 570L712 622L720 673L722 684L746 729L786 772L838 799L897 810L958 804L1011 781"
      stroke="#000"
      strokeWidth="2.500"
      strokeLinejoin="round"
    />
    <path d="M1316 365L1265 442L1184 567L1157 612M1160 617L1056 770L1033 792L992 809L944 815L912 809L958 804" stroke="#000" strokeWidth="2.200" />
    <path
      d="M1250 468L1045 755L1011 785L976 803L945 805M1046 755L1056 770M1240 480L1056 748L1046 762L1024 783M1200 530L1041 752v6h5M786 764v8"
      stroke="#222"
    />
    <path d="M1184 567L1194 573L1160 616L1157 610z" fill="#fff" stroke="#000" strokeWidth="2" strokeLinejoin="round" />

    {/* endpoint marker and cursor */}
    <rect x="1080" y="675" width="15" height="15" fill="#fff" />
    <rect x="1082" y="677" width="10" height="11" fill="#e88f88" stroke="#9c2b2e" strokeWidth="2" />
    <path d="M984 606v16l3-3 3 6 3-1-3-6h4z" fill="#000" />
    <path d="M1006 618c-5-4-9 3-6 6M1006 621c-3-2-5 0-3 3" stroke="#b06a70" />
  </SceneSvg>
);

/* ---------- app ---------- */

const menus = ['파일(F)', '편집(E)', '보기(V)', '카메라(C)', '그리기(R)', '도구(T)', '창(W)', '도움말(H)'];

const topTools = [
  'select', '|', 'eraser', ' ', 'pencil', 'v', 'arc2', 'v', 'rect', 'v', '|', 'push', 'offset', 'move', 'rotate', 'scale', '|',
  'tape', 'text', 'paint', '|', 'orbit', 'pan', 'zoom', 'extents', '|', 'warehouse', 'extWarehouse', 'share', '|', 'ruby', '#',
  'iso', 'top', 'front', 'right', 'back', 'left', '#', 'shell', '|', 'intersect', 'union', 'subtract', 'trim', 'split', '#', 'shadow',
];

const sideTools = [
  'select', 'component', 'paint', 'eraser', '|', 'pencil', 'freehand', 'rect', 'rotRect', 'circle', 'polygon', 'arc', 'arc2', 'arc3', 'pie', '|',
  'move', 'push', 'rotate', 'follow', 'scale', 'offset', '|', 'tape', 'dimension', 'protractor', 'text', 'axes', 'text3d', '|',
  'orbit', 'pan', 'zoom', 'zoomWindow', 'extents', 'previous', '|', 'person', 'eye', 'walk', 'section',
];

const keys = [
  { label: '<Enter>', opacity: 0.05 },
  { label: '<LButtonUp>', opacity: 0.5 },
  { label: '<MButtonDown>', opacity: 1 },
  { label: '<MButtonUp>', opacity: 1 },
];

const Panel = ({ title }) => (
  <PanelHeader>
    <PanelTitle>{title}</PanelTitle>
    <Spacer />
    <PanelClose type="button" aria-label={`${title} 닫기`}>
      <Cross color="#222" size={7} />
    </PanelClose>
  </PanelHeader>
);

const Check = ({ label, checked }) => (
  <CheckLabel>
    <CheckBox type="checkbox" defaultChecked={checked} disabled />
    {label}
  </CheckLabel>
);

const App = () => {
  const [tool, setTool] = useState('offset');

  const renderTool = (name, i, side) => {
    if (name === '|') return <Separator key={i} $horizontal={side} />;
    if (name === '#') return <Grip key={i} />;
    if (name === ' ') return <Gap key={i} />;
    if (name === 'v') return <DropButton key={i} type="button" aria-label="more" />;
    return (
      <ToolButton key={i} type="button" aria-label={name} $active={tool === name} onClick={() => setTool(name)}>
        <Icon name={name} />
      </ToolButton>
    );
  };

  return (
    <>
      <GlobalStyle />
      <Screen>
        <MenuBar>
          {menus.map((m) => (
            <MenuButton key={m} type="button">
              {m}
            </MenuButton>
          ))}
        </MenuBar>
        <TopToolbar>
          <Grip $first />
          {topTools.map((name, i) => renderTool(name, i, false))}
          <ShadowControl $width={145}>
            <ShadowRange
              type="range"
              aria-label="date"
              defaultValue="86"
              $track="linear-gradient(90deg, #fffff0, #f5d878 20%, #f3b81c 35%, #f4791c 50%, #f01010 68%, #f3656a 82%, #f6b6b6 90%, #fff)"
            />
            <ScaleText $months>
              {[...'JFMAMJJASOND'].map((m, i) => (
                <span key={i}>{m}</span>
              ))}
            </ScaleText>
          </ShadowControl>
          <ShadowControl $width={115}>
            <ShadowRange
              type="range"
              aria-label="time"
              defaultValue="81"
              $track="linear-gradient(90deg, #fff, #8fb7d6 40%, #5a7fe6 75%, #5560e0 88%, #3c44a0)"
            />
            <ScaleText>
              <span>07:08</span>
              <span>정오</span>
            </ScaleText>
          </ShadowControl>
          <Grip />
          <ToolButton type="button" aria-label="interact">
            <Icon name="interact" />
          </ToolButton>
        </TopToolbar>
        <Main>
          <SideColumn>
            <SideToolbar>{sideTools.map((name, i) => renderTool(name, i, true))}</SideToolbar>
          </SideColumn>
          <Viewport>
            <Scene />
            <KeyStack>
              {keys.map((k) => (
                <KeyBadge key={k.label} $opacity={k.opacity}>
                  {k.label}
                </KeyBadge>
              ))}
            </KeyStack>
          </Viewport>
          <Tray>
            <TrayTitle>
              기본 트레이
              <Spacer />
              <PlainButton type="button" aria-label="pin">
                <svg width="8" height="10" viewBox="0 0 9 11" fill="none" stroke="#111" strokeWidth="1.500">
                  <path d="M2 1h5M2.500 1v5M6 1v5M0 6.500h9M4.500 7v4" />
                </svg>
              </PlainButton>
              <TrayClose type="button" aria-label="close">
                <Cross color="#fff" size={7} />
              </TrayClose>
            </TrayTitle>
            <TrayBody>
              <Panels>
                <ShowOptions>
                  표시:
                  <CheckGroup $gap={6} $pad="4px 0 0 70px">
                    <Check label="면에" checked />
                    <Check label="바닥에" checked />
                    <Check label="가장자리에" />
                  </CheckGroup>
                </ShowOptions>
                <Panel title="가장자리 부드럽게" />
                <SoftenPanel>
                  법선 간 각도:
                  <AngleValue>17.3&nbsp; 도</AngleValue>
                  <AngleRange type="range" aria-label="법선 간 각도" defaultValue="10" disabled />
                  <Ticks />
                  <CheckGroup $gap={4} $pad="9px 0 0">
                    <Check label="법선 부드럽게" checked />
                    <Check label="동일 평면 부드럽게" />
                  </CheckGroup>
                </SoftenPanel>
                <Panel title="레이어" />
                <IconRow>
                  <PlainButton type="button" aria-label="add layer"><Plus /></PlainButton>
                  <PlainButton type="button" aria-label="remove layer"><Minus /></PlainButton>
                  <Spacer />
                  <PlainButton type="button" aria-label="details"><Details /></PlainButton>
                </IconRow>
                <LayerArea>
                  <LayerTable>
                    <colgroup>
                      <col />
                      <col width="50" />
                      <col width="40" />
                    </colgroup>
                    <thead>
                      <tr>
                        <th>이름</th>
                        <th>보기</th>
                        <th>색상</th>
                      </tr>
                    </thead>
                    <tbody>
                      <tr>
                        <td>
                          <LayerName>
                            <LayerRadio type="radio" name="layer" defaultChecked />
                            Layer0
                          </LayerName>
                        </td>
                        <td>
                          <CenterBox>
                            <CheckBox type="checkbox" aria-label="Layer0 보기" defaultChecked />
                          </CenterBox>
                        </td>
                        <td>
                          <Swatch type="button" aria-label="Layer0 색상" />
                        </td>
                      </tr>
                    </tbody>
                  </LayerTable>
                </LayerArea>
                <Splitter />
                <Panel title="장면" />
                <IconRow>
                  <PlainButton type="button" aria-label="refresh"><Refresh /></PlainButton>
                  <PlainButton type="button" aria-label="add scene"><Plus /></PlainButton>
                  <PlainButton type="button" aria-label="remove scene"><Minus /></PlainButton>
                  <Spacer />
                  <PlainButton type="button" aria-label="move down"><Hook /></PlainButton>
                  <PlainButton type="button" aria-label="move up"><Hook up /></PlainButton>
                  <PlainButton type="button" aria-label="view"><ListView /></PlainButton>
                  <PlainButton type="button" aria-label="show details"><MiniPanel /></PlainButton>
                  <PlainButton type="button" aria-label="menu"><Details /></PlainButton>
                </IconRow>
                <SceneList />
              </Panels>
              <Scrollbar>
                <Chevron />
                <ScrollTrack>
                  <ScrollThumb />
                </ScrollTrack>
                <Chevron down />
              </Scrollbar>
            </TrayBody>
          </Tray>
        </Main>
        <StatusBar>
          <StatusIcons>
            <svg width="18" height="18" viewBox="0 0 18 18">
              <circle cx="9" cy="9" r="8" fill="none" stroke="#999" strokeWidth="1.500" />
              <path d="M9 14L5.500 8a3.800 3.800 0 1 1 7 0z" fill="#999" />
            </svg>
            <svg width="18" height="18" viewBox="0 0 18 18">
              <circle cx="9" cy="9" r="8" fill="none" stroke="#111" strokeWidth="1.800" />
              <circle cx="9" cy="4.500" r="1.500" />
              <path d="M6 7h6v1.500h-1.500V14h-3V8.500H6z" />
            </svg>
            <svg width="18" height="18" viewBox="0 0 18 18">
              <circle cx="9" cy="9" r="8" fill="none" stroke="#999" strokeWidth="1.500" />
              <circle cx="9" cy="6.500" r="3" fill="#999" />
              <path d="M3 14c1-4 11-4 12 0-3 4-9 4-12 0z" fill="#999" />
            </svg>
          </StatusIcons>
          <StatusText>오프셋을 측정할 점을 선택하십시오. Alt = 겹침 허용.</StatusText>
          <Measure>
            단위
            <MeasureInput type="text" />
          </Measure>
        </StatusBar>
      </Screen>
    </>
  );
};

export default App;
